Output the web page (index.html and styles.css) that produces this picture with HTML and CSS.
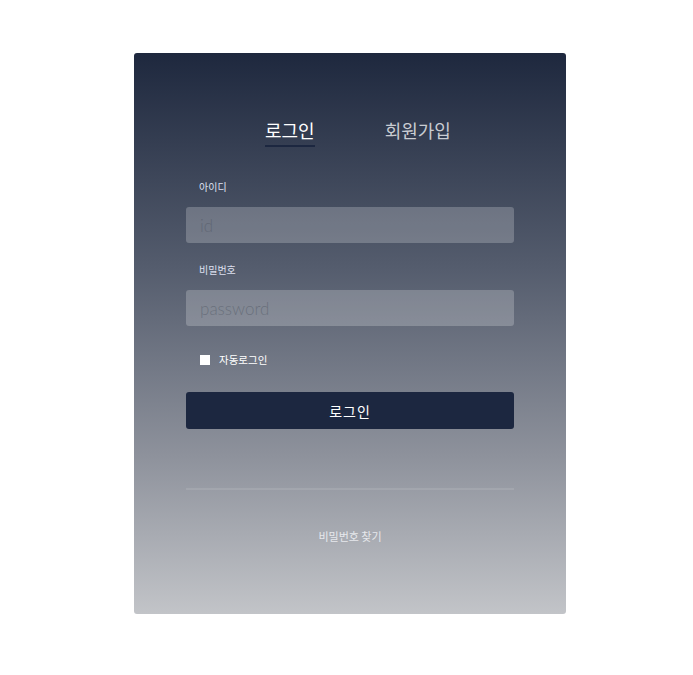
FILE: index.html
```html
<!DOCTYPE html>
<html>
<head>
  <meta charset="utf-8">
  <title>로그인</title>
  <link rel="stylesheet" href="styles.css">
</head>
<body>
<div class="login-wrap">
  <div class="login-card">
    <div class="tabs">
      <span class="tab active">로그인</span>
      <span class="tab">회원가입</span>
    </div>

    <form class="login-form">
      <label class="field-label" for="user-id">아이디</label>
      <input class="field-input" type="text" id="user-id" placeholder="id">

      <label class="field-label" for="user-pw">비밀번호</label>
      <input class="field-input" type="password" id="user-pw" placeholder="password">

      <label class="auto-login">
        <span class="check-box"></span>
        자동로그인
      </label>

      <button class="login-btn" type="button">로그인</button>
    </form>

    <hr class="divider">

    <a class="find-pw" href="#">비밀번호 찾기</a>
  </div>
</div>
</body>
</html>
```

FILE: styles.css
```css
body {
  margin: 0;
  background: #fff;
  font-family: "Noto Sans CJK KR", "Noto Sans", sans-serif;
}

.login-wrap {
  display: flex;
  justify-content: center;
  padding-top: 53px;
  padding-left: 7px;
}

.login-card {
  width: 432px;
  height: 561px;
  box-sizing: border-box;
  padding: 0 52px;
  border-radius: 3px;
  background: linear-gradient(#1e283e, #545c6d 38%, #8e929c 72%, #c2c4c8);
  display: flex;
  flex-direction: column;
}

.tabs {
  display: flex;
  padding-left: 79px;
  gap: 70px;
  margin-top: 62px;
}

.tab {
  font-size: 18px;
  line-height: 30px;
  color: #c9ccd2;
}

.tab.active {
  color: #fff;
  border-bottom: 2px solid #1c2740;
}

.login-form {
  display: flex;
  flex-direction: column;
  margin-top: 32px;
}

.field-label {
  font-size: 10px;
  line-height: 16px;
  color: #dde0f0;
  padding-left: 13px;
  margin-bottom: 12px;
}

.field-input {
  height: 36px;
  box-sizing: border-box;
  border: none;
  border-radius: 3px;
  background: rgba(255, 255, 255, 0.22);
  padding: 0 14px;
  font-family: Lato, "Noto Sans", sans-serif;
  font-weight: 300;
  font-size: 17px;
  color: #fff;
  margin-bottom: 19px;
  outline: none;
}

.field-input::placeholder {
  color: rgba(80, 86, 100, 0.5);
}

.auto-login {
  display: flex;
  align-items: center;
  gap: 9px;
  padding-left: 14px;
  font-size: 10.5px;
  color: #fff;
  margin-top: 7px;
}

.check-box {
  width: 10px;
  height: 10px;
  background: #fff;
}

.login-btn {
  margin-top: 25px;
  height: 37px;
  border: none;
  border-radius: 3px;
  background: #1c2740;
  color: #fff;
  font-family: "Noto Sans CJK KR", sans-serif;
  font-size: 14px;
  letter-spacing: 1px;
}

.divider {
  width: 100%;
  margin: 59px 0 0;
  border: none;
  height: 2px;
  background: rgba(255, 255, 255, 0.1);
}

.find-pw {
  align-self: center;
  margin-top: 38px;
  font-size: 11px;
  color: #e6e8ec;
  text-decoration: none;
}
```
